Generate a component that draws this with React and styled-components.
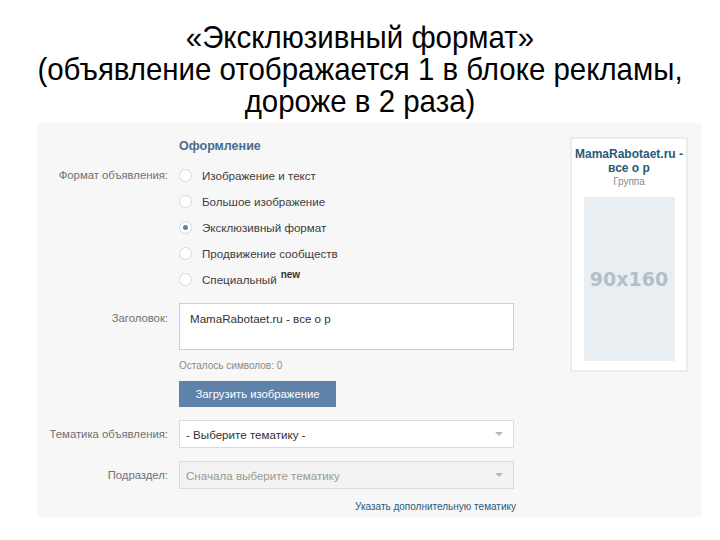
import styled, { createGlobalStyle } from "styled-components";

const GlobalStyle = createGlobalStyle`
  html, body {
    margin: 0;
    padding: 0;
    background: #ffffff;
  }
  body {
    font-family: "Liberation Sans", Arial, sans-serif;
  }
`;

const titleLines = [
  "«Эксклюзивный формат»",
  "(объявление отображается 1 в блоке рекламы,",
  "дороже в 2 раза)",
];

const formats = [
  { text: "Изображение и текст" },
  { text: "Большое изображение" },
  { text: "Эксклюзивный формат", checked: true },
  { text: "Продвижение сообществ" },
  { text: "Специальный", isNew: true },
];

const Arrow = () => (
  <svg width="8" height="4" viewBox="0 0 8 4">
    <path d="M0 0 L8 0 L4 4 Z" fill="#b4bac2" />
  </svg>
);

export default function App() {
  return (
    <>
      <GlobalStyle />
      <Slide>
        <Title>
          {titleLines.map((line) => (
            <TitleLine key={line}>{line}</TitleLine>
          ))}
        </Title>
        <Panel>
          <Form>
            <FieldRow>
              <span />
              <SectionTitle>Оформление</SectionTitle>
            </FieldRow>
            <FieldRow $top={8}>
              <Label $offset={5}>Формат объявления:</Label>
              <RadioList>
                {formats.map((f) => (
                  <RadioRow key={f.text}>
                    <Radio $checked={f.checked} />
                    <RadioText>{f.text}</RadioText>
                    {f.isNew && <NewMark>new</NewMark>}
                  </RadioRow>
                ))}
              </RadioList>
            </FieldRow>
            <FieldRow $top={11}>
              <Label $offset={7}>Заголовок:</Label>
              <TextBox>MamaRabotaet.ru - все о р</TextBox>
            </FieldRow>
            <FieldRow $top={9}>
              <span />
              <Hint>Осталось символов: 0</Hint>
            </FieldRow>
            <FieldRow $top={8}>
              <span />
              <div>
                <UploadButton>Загрузить изображение</UploadButton>
              </div>
            </FieldRow>
            <FieldRow $top={13}>
              <Label $offset={6}>Тематика объявления:</Label>
              <Select>
                <span>- Выберите тематику -</span>
                <Arrow />
              </Select>
            </FieldRow>
            <FieldRow $top={13}>
              <Label $offset={6}>Подраздел:</Label>
              <Select $disabled>
                <span>Сначала выберите тематику</span>
                <Arrow />
              </Select>
            </FieldRow>
            <FieldRow $top={7}>
              <span />
              <LinkLine>
                <ExtraLink>Указать дополнительную тематику</ExtraLink>
              </LinkLine>
            </FieldRow>
          </Form>
          <Preview>
            <PreviewTitle>MamaRabotaet.ru - все о р</PreviewTitle>
            <PreviewSub>Группа</PreviewSub>
            <Placeholder>90x160</Placeholder>
          </Preview>
        </Panel>
      </Slide>
    </>
  );
}

const Slide = styled.div`
  width: 720px;
  height: 540px;
  overflow: hidden;
`;

const Title = styled.h1`
  margin: 0;
  padding-top: 21px;
  font-family: "Liberation Sans", Arial, sans-serif;
  font-weight: normal;
  font-size: 32px;
  line-height: 32px;
  text-align: center;
  color: #000;
  transform: scaleX(0.92);
  transform-origin: 360px 0;
`;

const TitleLine = styled.span`
  display: block;
  white-space: nowrap;
`;

const Panel = styled.div`
  margin: 6px 18px 0 37px;
  height: 394px;
  box-sizing: border-box;
  background: #f7f7f7;
  padding: 15px 14px 7px 0;
  display: flex;
  gap: 56px;
  align-items: flex-start;
`;

const Form = styled.div`
  width: 477px;
  display: flex;
  flex-direction: column;
`;

const FieldRow = styled.div`
  display: grid;
  grid-template-columns: 131px 335px;
  column-gap: 11px;
  margin-top: ${(p) => p.$top || 0}px;
`;

const Label = styled.div`
  text-align: right;
  font-size: 11.3px;
  line-height: 16px;
  color: #707070;
  padding-top: ${(p) => p.$offset || 0}px;
`;

const SectionTitle = styled.div`
  font-size: 12.5px;
  line-height: 16px;
  font-weight: bold;
  color: #4a6b91;
`;

const RadioList = styled.div`
  display: flex;
  flex-direction: column;
`;

const RadioRow = styled.div`
  height: 26px;
  display: flex;
  align-items: center;
  gap: 10px;
`;

const Radio = styled.span`
  width: 13px;
  height: 13px;
  box-sizing: border-box;
  border-radius: 50%;
  border: 1px solid #d2d8df;
  background: #fff;
  display: flex;
  align-items: center;
  justify-content: center;
  &::after {
    content: "";
    width: 5px;
    height: 5px;
    border-radius: 50%;
    background: ${(p) => (p.$checked ? "#5f82a8" : "transparent")};
  }
`;

const RadioText = styled.span`
  font-size: 11.6px;
  color: #3d3d3d;
`;

const NewMark = styled.sup`
  font-size: 10px;
  font-weight: bold;
  color: #333;
  margin-left: -6px;
  align-self: flex-start;
  margin-top: 3px;
`;

const TextBox = styled.div`
  height: 47px;
  box-sizing: border-box;
  border: 1px solid #c6ced8;
  background: #fff;
  padding: 7px 10px;
  font-size: 11.6px;
  line-height: 16px;
  color: #333;
`;

const Hint = styled.div`
  font-size: 10px;
  line-height: 14px;
  color: #8a8a8a;
`;

const UploadButton = styled.button`
  width: 157px;
  height: 26px;
  border: none;
  background: #5e82a9;
  color: #fff;
  font-family: "Liberation Sans", Arial, sans-serif;
  font-size: 11.3px;
  padding: 0;
`;

const Select = styled.div`
  height: 28px;
  box-sizing: border-box;
  border: 1px solid #d6dce2;
  background: ${(p) => (p.$disabled ? "#f2f2f2" : "#fff")};
  display: flex;
  align-items: center;
  justify-content: space-between;
  padding: 0 10px 0 6px;
  font-size: 11.6px;
  color: ${(p) => (p.$disabled ? "#9a9a9a" : "#333")};
`;

const LinkLine = styled.div`
  text-align: right;
  margin-right: -2px;
`;

const ExtraLink = styled.span`
  font-size: 10px;
  line-height: 14px;
  color: #2b587a;
`;

const Preview = styled.div`
  width: 118px;
  height: 235px;
  box-sizing: border-box;
  margin-top: -1px;
  background: #fff;
  border: 2px solid #ececec;
  display: flex;
  flex-direction: column;
  align-items: center;
  padding: 8px 0 0;
`;

const PreviewTitle = styled.div`
  width: 114px;
  text-align: center;
  font-size: 12px;
  line-height: 14px;
  font-weight: bold;
  color: #2b587a;
`;

const PreviewSub = styled.div`
  font-size: 10px;
  line-height: 14px;
  color: #888;
`;

const Placeholder = styled.div`
  margin-top: 8px;
  width: 91px;
  height: 164px;
  background: #e9eef3;
  display: flex;
  align-items: center;
  justify-content: center;
  font-family: "DejaVu Sans", sans-serif;
  font-size: 19px;
  font-weight: bold;
  color: #b5bec7;
`;
